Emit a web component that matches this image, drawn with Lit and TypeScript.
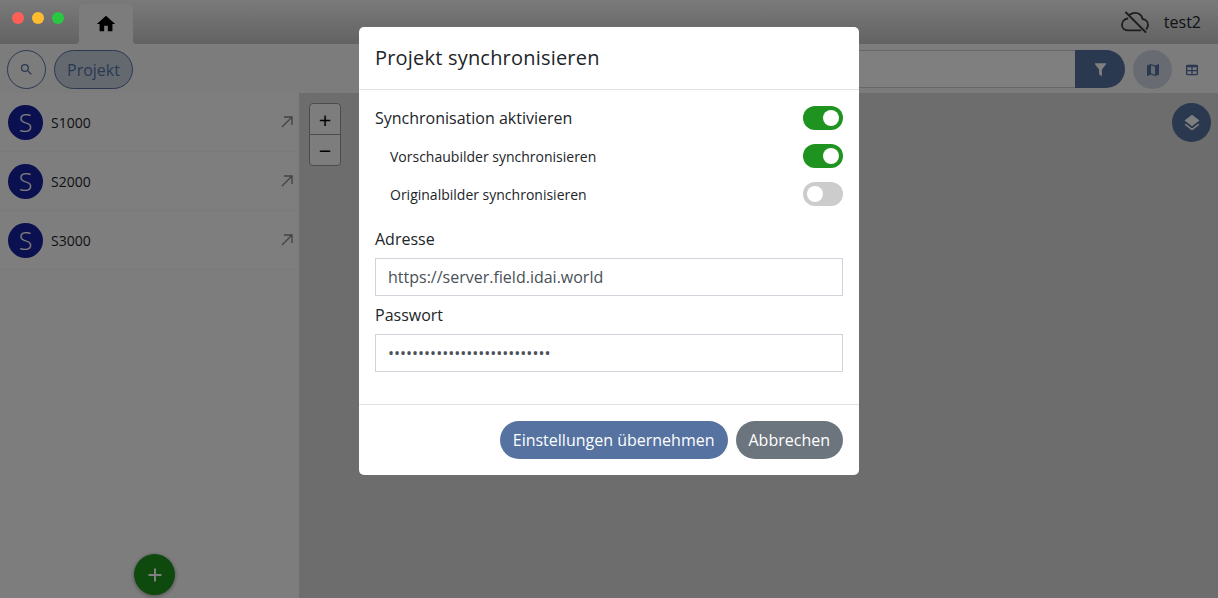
import { LitElement, css, html, svg } from 'lit';
import { customElement } from 'lit/decorators.js';

const HOME = 'M10 20v-6h4v6h5v-8h3L12 3 2 12h3v8z';
const SEARCH = 'M9.5 3A6.5 6.5 0 0 1 16 9.5c0 1.61-.59 3.09-1.56 4.23l.27.27h.79l5 5-1.5 1.5-5-5v-.79l-.27-.27A6.5 6.5 0 0 1 9.5 16 6.5 6.5 0 0 1 3 9.5 6.5 6.5 0 0 1 9.5 3m0 2C7 5 5 7 5 9.5S7 14 9.5 14 14 12 14 9.5 12 5 9.5 5z';
const FILTER = 'M14,12V19.88C14.04,20.18 13.94,20.5 13.71,20.71C13.32,21.1 12.69,21.1 12.3,20.71L10.29,18.7C10.06,18.47 9.96,18.16 10,17.87V12H9.97L4.21,4.62C3.87,4.19 3.95,3.56 4.38,3.22C4.57,3.08 4.78,3 5,3H19C19.22,3 19.43,3.08 19.62,3.22C20.05,3.56 20.13,4.19 19.79,4.62L14.03,12H14Z';
const MAP = 'M15,19L9,16.89V5L15,7.11M20.5,3C20.44,3 20.39,3 20.34,3L15,5.1L9,3L3.36,4.9C3.15,4.97 3,5.15 3,5.38V20.5A0.5,0.5 0 0,0 3.5,21C3.55,21 3.61,21 3.66,20.97L9,18.9L15,21L20.64,19.1C20.85,19 21,18.85 21,18.62V3.5A0.5,0.5 0 0,0 20.5,3Z';
const TABLE = 'M5,4H19A2,2 0 0,1 21,6V18A2,2 0 0,1 19,20H5A2,2 0 0,1 3,18V6A2,2 0 0,1 5,4M5,8V12H11V8H5M13,8V12H19V8H13M5,14V18H11V14H5M13,14V18H19V14H13Z';
const LAYERS = 'M12,16L19.36,10.27L21,9L12,2L3,9L4.63,10.27M12,18.54L4.62,12.81L3,14.07L12,21.07L21,14.07L19.37,12.8L12,18.54Z';

const icon = (d: string, size: number) => html`<svg width=${size} height=${size} viewBox="0 0 24 24" fill="currentColor" fill-rule="evenodd">${svg`<path d=${d}></path>`}</svg>`;

const projects = ['S1000', 'S2000', 'S3000'];

@customElement('app-root')
export class AppRoot extends LitElement {
  static override styles = css`
    :host {
      display: block;
      position: relative;
      width: 100%;
      height: 100vh;
      overflow: hidden;
      font-family: 'Open Sans', sans-serif;
      color: #212529;
      background: #fff;
    }

    .app {
      display: flex;
      flex-direction: column;
      height: 100%;
    }

    .titlebar {
      display: flex;
      align-items: flex-end;
      height: 44px;
      flex: none;
      padding-left: 79px;
      background: linear-gradient(#f4f4f4, #c6c6c6);
    }

    /* window buttons stay bright, they are drawn over the backdrop */
    .lights {
      position: absolute;
      left: 12px;
      top: 12px;
      display: flex;
      gap: 8px;
    }

    .lights i {
      width: 12px;
      height: 12px;
      border-radius: 50%;
    }

    .tab {
      position: relative;
      display: flex;
      align-items: center;
      justify-content: center;
      width: 54px;
      height: 40px;
      border-radius: 5px 5px 0 0;
      background: #f8f8f8;
      color: #000;
    }

    .tab::before,
    .tab::after {
      content: '';
      position: absolute;
      bottom: 0;
      width: 4px;
      height: 4px;
    }

    .tab::before {
      left: -4px;
      background: radial-gradient(circle at 0 0, transparent 4px, #f8f8f8 4.5px);
    }

    .tab::after {
      right: -4px;
      background: radial-gradient(circle at 100% 0, transparent 4px, #f8f8f8 4.5px);
    }

    .account {
      display: flex;
      align-items: center;
      gap: 15px;
      margin-left: auto;
      align-self: flex-start;
      height: 44px;
      padding-right: 17px;
      font-size: 16px;
    }

    .toolbar {
      display: flex;
      align-items: flex-start;
      height: 49px;
      flex: none;
      box-sizing: border-box;
      padding: 6px 7px 0;
      background: #f8f8f8;
    }

    .round {
      display: flex;
      align-items: center;
      justify-content: center;
      width: 39px;
      height: 39px;
      flex: none;
      box-sizing: border-box;
      border-radius: 50%;
      color: #5572a1;
    }

    .search-btn {
      border: 1px solid #5572a1;
    }

    .pill {
      display: flex;
      align-items: center;
      height: 39px;
      margin-left: 8px;
      padding: 0 12px;
      box-sizing: border-box;
      border: 1px solid #5572a1;
      border-radius: 20px;
      background: #c9d2e0;
      color: #5572a1;
      font-size: 16px;
    }

    .search-field {
      flex: 1;
      height: 38px;
      margin-left: 280px;
      box-sizing: border-box;
      border-top: 1px solid #cfcfcf;
      border-bottom: 1px solid #cfcfcf;
      background: #fff;
    }

    .filter {
      display: flex;
      align-items: center;
      justify-content: center;
      width: 50px;
      height: 38px;
      flex: none;
      border-radius: 0 19px 19px 0;
      background: #5572a1;
      color: #fff;
    }

    .map-btn {
      margin-left: 8px;
      background: #d0d7e3;
    }

    .content {
      flex: 1;
      display: flex;
      min-height: 0;
    }

    .sidebar {
      position: relative;
      width: 299px;
      flex: none;
      background: #fbfbfb;
    }

    .row {
      display: flex;
      align-items: center;
      height: 58px;
      padding: 0 6px 0 8px;
      border-bottom: 1px solid #f4f4f4;
      background: #fdfdfd;
      font-size: 14px;
    }

    .avatar {
      display: flex;
      align-items: center;
      justify-content: center;
      width: 35px;
      height: 35px;
      margin-right: 8px;
      border-radius: 50%;
      background: #1722a0;
      color: #fff;
      font-size: 25px;
      font-weight: 300;
    }

    .row svg {
      margin-left: auto;
      color: #848484;
    }

    .fab {
      position: absolute;
      left: 134px;
      bottom: 3px;
      display: flex;
      align-items: center;
      justify-content: center;
      width: 41px;
      height: 41px;
      border-radius: 50%;
      background: #1d921d;
      color: #fff;
      box-shadow: 0 1px 4px rgba(0, 0, 0, 0.4);
    }

    .map {
      position: relative;
      flex: 1;
      background: #dadada;
    }

    .zoom {
      position: absolute;
      left: 10px;
      top: 10px;
      width: 32px;
      box-sizing: border-box;
      border: 1px solid #999;
      border-radius: 4px;
      background: #fbfbfb;
    }

    .zoom div {
      display: flex;
      align-items: center;
      justify-content: center;
      height: 30px;
      font-size: 22px;
      line-height: 1;
      color: #000;
    }

    .zoom div + div {
      border-top: 1px solid #999;
    }

    .layers {
      position: absolute;
      right: 7px;
      top: 10px;
      background: #5572a1;
      color: #fff;
    }

    .backdrop {
      position: absolute;
      inset: 0;
      background: rgba(0, 0, 0, 0.5);
    }

    .modal {
      position: absolute;
      left: 359px;
      top: 27px;
      width: 500px;
      height: 448px;
      display: flex;
      flex-direction: column;
      border-radius: 5px;
      background: #fff;
    }

    .modal-head {
      display: flex;
      align-items: center;
      height: 63px;
      flex: none;
      box-sizing: border-box;
      padding: 0 16px 2px;
      border-bottom: 1px solid #dee2e6;
      font-size: 20px;
      font-weight: 500;
      letter-spacing: 0.2px;
    }

    .modal-body {
      flex: 1;
      padding: 16px 16px 0;
    }

    .setting {
      display: flex;
      align-items: center;
      justify-content: space-between;
      height: 24px;
      font-size: 16px;
      margin-bottom: 14px;
    }

    .setting.sub {
      padding-left: 15px;
      font-size: 14px;
    }

    .switch {
      display: flex;
      align-items: center;
      justify-content: flex-end;
      width: 40px;
      height: 24px;
      box-sizing: border-box;
      padding: 0 4px;
      border-radius: 12px;
      background: #1f931f;
    }

    .switch.off {
      justify-content: flex-start;
      background: #ccc;
    }

    .switch i {
      width: 16px;
      height: 16px;
      border-radius: 50%;
      background: #fff;
    }

    .field-label {
      display: block;
      height: 24px;
      margin-bottom: 7px;
      font-size: 16px;
      line-height: 24px;
    }

    .first {
      margin-top: 21px;
    }

    input {
      display: block;
      width: 100%;
      height: 38px;
      box-sizing: border-box;
      margin-bottom: 7px;
      padding: 0 12px;
      border: 1px solid #ced4da;
      outline: none;
      font: 16px 'Open Sans', sans-serif;
      color: #495057;
    }

    .modal-foot {
      display: flex;
      justify-content: flex-end;
      gap: 8px;
      height: 71px;
      flex: none;
      box-sizing: border-box;
      padding: 16px 16px 0 0;
      border-top: 1px solid #dee2e6;
    }

    .btn {
      display: flex;
      align-items: center;
      height: 38px;
      padding: 0 13px;
      border-radius: 19px;
      color: #fff;
      font-size: 16px;
    }

    .btn.primary {
      background: #5572a1;
    }

    .btn.secondary {
      background: #6c757d;
    }
  `;

  override render() {
    return html`
      <div class="app">
        <div class="titlebar">
          <div class="tab">${icon(HOME, 22)}</div>
          <div class="account">
            <svg width="28" height="22" viewBox="0 0 28 22" fill="none" stroke="#3a3a3a" stroke-width="1.800" stroke-linecap="round" stroke-linejoin="round">
              <path d="M6.500 7.500C3.500 8 1 10.500 1 13.800C1 17 3.500 19.300 6.500 19.300H19.500"></path>
              <path d="M9 3.500C10.300 2.500 12 1.800 14 1.800C18 1.800 20.800 4.500 21.600 8C24.500 8.300 27 10.500 27 14C27 15.500 26.400 16.800 25.500 17.800"></path>
              <line x1="5" y1="1.500" x2="24.500" y2="21"></line>
            </svg>
            <span>test2</span>
          </div>
        </div>
        <div class="toolbar">
          <div class="round search-btn">${icon(SEARCH, 15)}</div>
          <div class="pill">Projekt</div>
          <div class="search-field"></div>
          <div class="filter">${icon(FILTER, 17)}</div>
          <div class="round map-btn">${icon(MAP, 16)}</div>
          <div class="round">${icon(TABLE, 16)}</div>
        </div>
        <div class="content">
          <div class="sidebar">
            ${projects.map(
              (name) => html`
                <div class="row">
                  <div class="avatar">S</div>
                  <span>${name}</span>
                  <svg width="12" height="12" viewBox="0 0 12 12" fill="none" stroke="currentColor" stroke-width="1.300">
                    <path d="M1 11L11 1M3 1H11V9"></path>
                  </svg>
                </div>
              `,
            )}
            <div class="fab">
              <svg width="16" height="16" viewBox="0 0 16 16" stroke="currentColor" stroke-width="2"><path d="M8 1.500V14.500M1.500 8H14.500"></path></svg>
            </div>
          </div>
          <div class="map">
            <div class="zoom"><div>+</div><div>−</div></div>
            <div class="round layers">${icon(LAYERS, 20)}</div>
          </div>
        </div>
      </div>
      <div class="backdrop"></div>
      <div class="lights">
        <i style="background:#ff5f57"></i><i style="background:#febc2e"></i><i style="background:#28c840"></i>
      </div>
      <div class="modal">
        <div class="modal-head">Projekt synchronisieren</div>
        <div class="modal-body">
          <div class="setting"><span>Synchronisation aktivieren</span><div class="switch"><i></i></div></div>
          <div class="setting sub"><span>Vorschaubilder synchronisieren</span><div class="switch"><i></i></div></div>
          <div class="setting sub"><span>Originalbilder synchronisieren</span><div class="switch off"><i></i></div></div>
          <label class="field-label first">Adresse</label>
          <input type="text" value="https://server.field.idai.world" />
          <label class="field-label">Passwort</label>
          <input type="password" value="abcdefghijklmnopqrstuvwxyz1" />
        </div>
        <div class="modal-foot">
          <div class="btn primary">Einstellungen übernehmen</div>
          <div class="btn secondary">Abbrechen</div>
        </div>
      </div>
    `;
  }
}
